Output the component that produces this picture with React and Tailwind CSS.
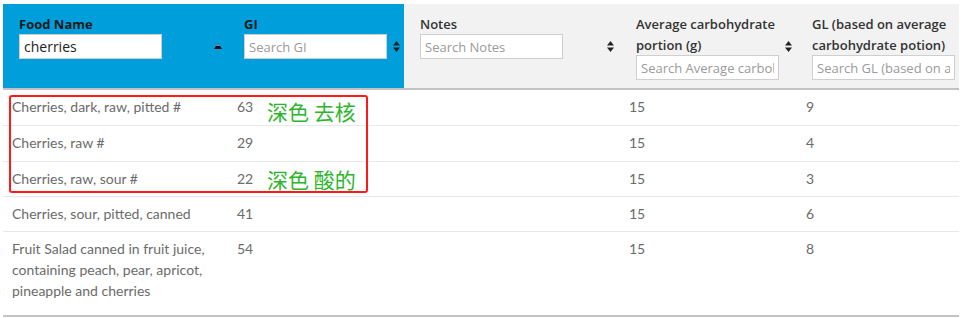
import React from 'react';

const rows = [
    { food: ['Cherries, dark, raw, pitted #'], gi: '63', carb: '15', gl: '9', h: 'h-[36px]' },
    { food: ['Cherries, raw #'], gi: '29', carb: '15', gl: '4', h: 'h-[36px]' },
    { food: ['Cherries, raw, sour #'], gi: '22', carb: '15', gl: '3', h: 'h-[35px]' },
    { food: ['Cherries, sour, pitted, canned'], gi: '41', carb: '15', gl: '6', h: 'h-[35px]' },
    {
        food: ['Fruit Salad canned in fruit juice,', 'containing peach, pear, apricot,', 'pineapple and cherries'],
        gi: '54',
        carb: '15',
        gl: '8',
        h: 'h-[85px]',
        last: true,
    },
];

// both arrows, unsorted column
const SortBoth = () => (
    <svg width="7" height="11" viewBox="0 0 7 11" className="shrink-0">
        <path d="M3.5 0 L7 4.5 H0 Z" fill="#222" />
        <path d="M3.5 11 L7 6.5 H0 Z" fill="#222" />
    </svg>
);

// active ascending sort
const SortUp = () => (
    <svg width="8" height="7" viewBox="0 0 8 7" className="shrink-0">
        <path d="M4 0 L8 6 H0 Z" fill="#111" />
        <path d="M4 0 L6 3 H2 Z" fill="#8a7fd6" />
    </svg>
);

const inputCls =
    'h-[25px] w-[143px] bg-white border border-[#cfcfcf] px-[4px] text-[13px] text-[#222] placeholder:text-[#9a9a9a] outline-none';

export default function App() {
    return (
        <div className="bg-white w-[977px] h-[318px] pt-[4px] pl-[3px]" style={{ fontFamily: '"Open Sans", sans-serif' }}>
            <div className="relative w-[956px]">
                {/* header */}
                <div className="flex h-[86px] border-b-2 border-[#c2c2c2]">
                    <div className="w-[225px] h-[84px] bg-[#009fdc] flex pl-4 pr-[6px]">
                        <div className="flex flex-col w-[143px] pt-[10px]">
                            <div className="text-[13px] leading-[20px] font-bold text-[#1a1a1a]">Food Name</div>
                            <input readOnly value="cherries" className={inputCls + ' text-[14px]'} />
                        </div>
                        <div className="flex-1 flex justify-end items-center pt-[1px]">
                            <SortUp />
                        </div>
                    </div>
                    <div className="w-[176px] h-[84px] bg-[#009fdc] flex pl-4 pr-[4px]">
                        <div className="flex flex-col w-[143px] pt-[10px]">
                            <div className="text-[13px] leading-[20px] font-bold text-[#1a1a1a]">GI</div>
                            <input readOnly placeholder="Search GI" className={inputCls} />
                        </div>
                        <div className="flex-1 flex justify-end items-center">
                            <SortBoth />
                        </div>
                    </div>
                    <div className="flex flex-1 bg-[#f2f2f2] h-[84px]">
                        <div className="w-[216px] flex pl-4 pr-[6px]">
                            <div className="flex flex-col w-[143px] pt-[10px]">
                                <div className="text-[13px] leading-[20px] font-semibold text-[#333]">Notes</div>
                                <input readOnly placeholder="Search Notes" className={inputCls} />
                            </div>
                            <div className="flex-1 flex justify-end items-center">
                                <SortBoth />
                            </div>
                        </div>
                        <div className="w-[176px] flex pl-4 pr-[4px]">
                            <div className="flex flex-col w-[143px] pt-[10px]">
                                <div className="text-[13px] leading-[21px] font-semibold text-[#333] whitespace-nowrap">
                                    <div>Average carbohydrate</div>
                                    <div>portion (g)</div>
                                </div>
                                <input
                                    readOnly
                                    placeholder="Search Average carbohydrate portion (g)"
                                    className={inputCls + ' mt-[-1px]'}
                                />
                            </div>
                            <div className="flex-1 flex justify-end items-center">
                                <SortBoth />
                            </div>
                        </div>
                        <div className="flex-1 flex pl-4">
                            <div className="flex flex-col w-[143px] pt-[10px]">
                                <div className="text-[13px] leading-[21px] font-semibold text-[#333] whitespace-nowrap">
                                    <div>GL (based on average</div>
                                    <div>carbohydrate potion)</div>
                                </div>
                                <input
                                    readOnly
                                    placeholder="Search GL (based on average carbohydrate potion)"
                                    className={inputCls + ' mt-[-1px]'}
                                />
                            </div>
                        </div>
                    </div>
                </div>

                {/* body */}
                <div className="text-[14px] leading-[21px] text-[#6b6b6b]" style={{ fontFamily: 'Lato, sans-serif' }}>
                    {rows.map((r, i) => (
                        <div
                            key={i}
                            className={`flex ${r.h} ${r.last ? 'border-b-2 border-[#c4c4c4]' : 'border-b border-[#e8e8e8]'} pt-[6px]`}
                        >
                            <div className="w-[225px] pl-[9px]">
                                {r.food.map((l) => (
                                    <div key={l}>{l}</div>
                                ))}
                            </div>
                            <div className="w-[176px] pl-[9px]">{r.gi}</div>
                            <div className="w-[216px]" />
                            <div className="w-[176px] pl-[9px]">{r.carb}</div>
                            <div className="flex-1 pl-[10px]">{r.gl}</div>
                        </div>
                    ))}
                </div>

                {/* annotation overlay */}
                <div className="absolute left-[6px] top-[91px] w-[359px] h-[98px] border-2 border-[#ff1a1a] rounded-[3px] pointer-events-none" />
                <div
                    className="absolute left-[264px] top-[94px] text-[21px] leading-[26px] text-[#2db52d] pointer-events-none"
                    style={{ fontFamily: '"Noto Sans CJK SC", sans-serif' }}
                >
                    深色 去核
                </div>
                <div
                    className="absolute left-[264px] top-[162px] text-[21px] leading-[26px] text-[#2db52d] pointer-events-none"
                    style={{ fontFamily: '"Noto Sans CJK SC", sans-serif' }}
                >
                    深色 酸的
                </div>
            </div>
        </div>
    );
}
